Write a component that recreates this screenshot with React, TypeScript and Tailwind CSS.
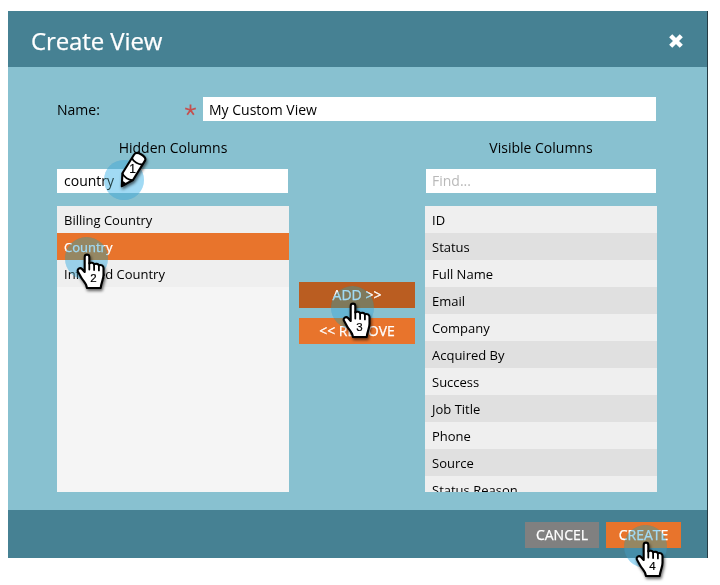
import React from "react";

const hidden = ["Billing Country", "Country", "Inferred Country"];
const visible = [
  "ID", "Status", "Full Name", "Email", "Company", "Acquired By",
  "Success", "Job Title", "Phone", "Source", "Status Reason",
];

function Halo({ className }: { className: string }) {
  return (
    <>
      <span className={`pointer-events-none absolute rounded-full bg-[#add2f0] mix-blend-multiply ${className}`} />
      <span className={`pointer-events-none absolute rounded-full bg-[#82f0ff]/27 ${className}`} />
    </>
  );
}

function Hand({ n, className }: { n: number; className: string }) {
  return (
    <div className={`pointer-events-none absolute h-[60px] w-[48px] ${className}`}>
      <Halo className="left-[0.5px] top-[0.5px] h-[43px] w-[43px]" />
      <svg className="absolute left-0 top-0 h-[60px] w-[48px]" viewBox="0 0 48 60">
        <g style={{ filter: "drop-shadow(1px 2px 1.5px rgba(0,0,0,.6))" }}>
          <path
            d="M20.7 21C20.7 17.8 25.3 17.8 25.3 21V27.4C26.6 26.3 29.6 26.6 30.1 28.4C31.7 27.3 34.3 27.7 34.9 29.4C37 28.4 39.5 29.6 39.5 32V38.8C39.5 43.5 37.3 46 36.7 52H22.9C22.7 47.6 19.2 45.2 17.2 41.5L13.9 35.6C12.9 33 15.9 30.9 18 33L20.7 36Z"
            fill="#fff" stroke="#000" strokeWidth="2.1" strokeLinejoin="round"
          />
          <path d="M25.3 27V33.6M30.1 28.4V34M34.9 29.4V34.4" stroke="#000" strokeWidth="1.8" strokeLinecap="round" />
        </g>
        <text x="29.4" y="46.4" textAnchor="middle" className="font-['Liberation_Sans',sans-serif] text-[11.5px]" fill="#000" stroke="#000" strokeWidth=".2">{n}</text>
      </svg>
    </div>
  );
}

function Pencil() {
  return (
    <div className="pointer-events-none absolute left-[95px] top-[134px] h-[60px] w-[50px]">
      <Halo className="left-px top-[15px] h-10 w-10" />
      <svg className="absolute left-0 top-0 h-[60px] w-[50px]" viewBox="0 0 50 60">
        <g style={{ filter: "drop-shadow(1px 2px 1.5px rgba(0,0,0,.6))" }} strokeLinejoin="round">
          <path d="M18.8 41.2L19.4 28.3L31.3 9.3C33.5 5.6 44.5 11.4 42 15.6L30 35Z" fill="#fff" stroke="#000" strokeWidth="2.1" />
          <path d="M19.4 28.3C20.5 32 26 35.4 30 35M29 13C30 16.6 36 20 39.7 19.4" fill="none" stroke="#000" strokeWidth="1.8" />
          <path d="M18.8 41.2V36L23.2 38.9Z" fill="#000" stroke="#000" strokeWidth="1.2" />
        </g>
        <text x="29.6" y="28" textAnchor="middle" className="font-['Liberation_Sans',sans-serif] text-[12px]" fill="#000" stroke="#000" strokeWidth=".2">1</text>
      </svg>
    </div>
  );
}

export default function App() {
  return (
    <div className="h-[585px] w-[720px] overflow-hidden bg-white pl-2 pt-[11px] font-['Open_Sans',sans-serif] text-[13px] text-black">
      <div className="relative flex h-[547px] w-[700px] flex-col border-r border-[#263c45] bg-[#88c1d0]">
        <header className="flex h-14 shrink-0 items-center justify-between bg-[#468193] pl-[23px] pr-[23px] text-white">
          <h1 className="pt-[3px] text-[24px] leading-8 tracking-[-0.1px] [-webkit-text-stroke:0.25px_white]">Create View</h1>
          <svg className="mt-1 h-4 w-4" viewBox="0 0 16 16">
            <path d="M2.7 2.7L13.3 13.3M13.3 2.7L2.7 13.3" stroke="#fff" strokeWidth="4.4" />
          </svg>
        </header>

        <main className="flex h-[443px] shrink-0 flex-col pl-[49px] pt-[30px]">
          <div className="flex h-6 items-center">
            <label className="w-[127px] text-[14px]">Name:</label>
            <svg className="mt-0.5 h-3 w-[19px]" viewBox="0 0 19 12">
              <path d="M6.5 6V.5M6.5 6L1.2 4.4M6.5 6L11.8 4.4M6.5 6L3.2 10.7M6.5 6L9.8 10.7" stroke="#c5504f" strokeWidth="1.8" />
            </svg>
            <div className="flex h-6 w-[453px] items-center bg-white pl-1.5 text-[14px]">My Custom View</div>
          </div>
          <div className="mt-4 flex">
            <section className="w-[232px]">
              <h2 className="h-8 text-center text-[14px] leading-[22px]">Hidden Columns</h2>
              <div className="h-6 w-[231px] bg-white pl-[7px] text-[14px] leading-[23px]">country</div>
              <ul className="mt-[13px] h-[286px] overflow-hidden bg-[#f5f5f5]">
                {hidden.map((t, i) => (
                  <li key={t} className={`h-[27px] pl-[7px] leading-[28px] ${i === 1 ? "bg-[#e8742c] text-white [-webkit-text-stroke:0.25px_white]" : "bg-[#efefef]"}`}>{t}</li>
                ))}
              </ul>
            </section>
            <div className="flex w-[136px] flex-col items-center gap-2.5 pt-[145px] text-[14px] text-white [-webkit-text-stroke:0.25px_white]">
              <button className="h-[26px] w-[116px] bg-[#ba5d21] leading-[26px]">ADD &gt;&gt;</button>
              <button className="h-[26px] w-[116px] bg-[#e8742c] leading-[26px]">&lt;&lt; REMOVE</button>
            </div>
            <section className="w-[232px]">
              <h2 className="h-8 text-center text-[14px] leading-[22px]">Visible Columns</h2>
              <div className="ml-px h-6 w-[230px] bg-white pl-1.5 text-[14px] leading-[23px] text-[#b9b9b9]">Find...</div>
              <ul className="mt-[13px] h-[286px] overflow-hidden">
                {visible.map((t, i) => (
                  <li key={t} className={`h-[27px] pl-[7px] leading-[28px] ${i % 2 ? "bg-[#e0e0e0]" : "bg-[#efefef]"}`}>{t}</li>
                ))}
              </ul>
            </section>
          </div>
        </main>

        <footer className="flex h-12 shrink-0 justify-end gap-[7px] bg-[#468193] pr-[26px] pt-3 text-[14px] text-white [-webkit-text-stroke:0.25px_white]">
          <button className="h-[26px] w-[74px] bg-[#808080] leading-[26px]">CANCEL</button>
          <button className="h-[26px] w-[75px] bg-[#e8742c] leading-[26px]">CREATE</button>
        </footer>

        <Pencil />
        <Hand n={2} className="left-[56px] top-[225px]" />
        <Hand n={3} className="left-[322px] top-[274px]" />
        <Hand n={4} className="left-[615px] top-[513px]" />
      </div>
    </div>
  );
}
